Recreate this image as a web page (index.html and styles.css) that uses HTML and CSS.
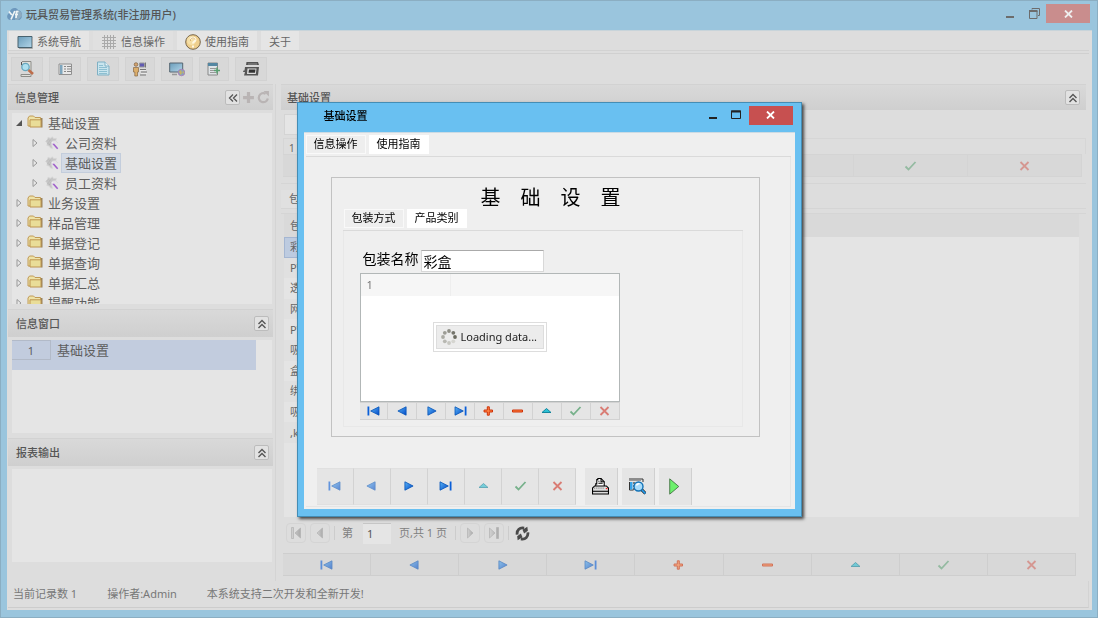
FILE: index.html
```html
<!DOCTYPE html>
<html lang="zh-CN">
<head>
<meta charset="utf-8">
<title>玩具贸易管理系统(非注册用户)</title>
<link rel="stylesheet" href="styles.css">
</head>
<body>
<svg class="defs" aria-hidden="true">
  <defs>
    <linearGradient id="gBlue" x1="0" y1="0" x2="1" y2="1"><stop offset="0" stop-color="#5ab4f5"/><stop offset="1" stop-color="#0048c8"/></linearGradient>
    <linearGradient id="gScreen" x1="0" y1="0" x2="1" y2="1"><stop offset="0" stop-color="#6a9dbb"/><stop offset="1" stop-color="#b3d5e8"/></linearGradient>
    <linearGradient id="gGrey" x1="0" y1="0" x2="1" y2="0"><stop offset="0" stop-color="#d2d2d2"/><stop offset="1" stop-color="#aaa"/></linearGradient>
  </defs>
  <symbol id="first" viewBox="0 0 12 10"><path d="M0 .5h1.800v9H0z" fill="#0a5fd8"/><path d="M11.500.8v8.400L3.200 5z" fill="url(#gBlue)" stroke="#0654b8" stroke-width=".8"/></symbol>
  <symbol id="prev" viewBox="0 0 12 10"><path d="M9.600.8v8.400L1.400 5z" fill="url(#gBlue)" stroke="#0654b8" stroke-width=".8"/></symbol>
  <symbol id="next" viewBox="0 0 12 10"><path d="M2.400.8v8.400L10.600 5z" fill="url(#gBlue)" stroke="#0654b8" stroke-width=".8"/></symbol>
  <symbol id="last" viewBox="0 0 12 10"><path d="M10.200.5H12v9h-1.800z" fill="#0a5fd8"/><path d="M.5.8v8.400L8.800 5z" fill="url(#gBlue)" stroke="#0654b8" stroke-width=".8"/></symbol>
  <symbol id="add" viewBox="0 0 12 10"><path d="M4.800.8h2v3.200H10v2H6.800v3.200h-2V6H1.600V4h3.200z" fill="#ff8040" stroke="#cf3208" stroke-width="1"/></symbol>
  <symbol id="del" viewBox="0 0 12 10"><path d="M1 4h10v2H1z" fill="#ff8040" stroke="#cf3208" stroke-width="1"/></symbol>
  <symbol id="edit" viewBox="0 0 12 10"><path d="M1.500 6.500 6 2.500l4.500 4z" fill="#2cc0d4" stroke="#087e96" stroke-width=".9"/></symbol>
  <symbol id="ok" viewBox="0 0 12 10"><path d="M1 5.500 4 8.500l7-7.500" fill="none" stroke="#2f8f50" stroke-width="1.800"/></symbol>
  <symbol id="no" viewBox="0 0 12 10"><path d="m2 1 8 8m0-8L2 9" fill="none" stroke="#d2382a" stroke-width="1.800"/></symbol>
  <symbol id="gfirst" viewBox="0 0 12 12"><path d="M1.500.5h2v11h-2zM10.500 1v10L5 6z" fill="url(#gGrey)" stroke="#b2b2b2" stroke-width=".7"/></symbol>
  <symbol id="gprev" viewBox="0 0 12 12"><path d="M8.500 1v10L3 6z" fill="url(#gGrey)" stroke="#b2b2b2" stroke-width=".7"/></symbol>
  <symbol id="gnext" viewBox="0 0 12 12"><path d="M3.500 1v10L9 6z" fill="url(#gGrey)" stroke="#b2b2b2" stroke-width=".7"/></symbol>
  <symbol id="glast" viewBox="0 0 12 12"><path d="M1.500 1v10L7 6zM8.500.5h2v11h-2z" fill="url(#gGrey)" stroke="#b2b2b2" stroke-width=".7"/></symbol>
  <symbol id="up2" viewBox="0 0 10 10"><path d="M1.500 5 5 1.500 8.500 5M1.500 9 5 5.500 8.500 9" fill="none" stroke="#555" stroke-width="1.400"/></symbol>
  <symbol id="folder" viewBox="0 0 16 13"><path d="M5 3h10.500v9.500H14V5z" fill="#98825a"/><path d="M1 11V3l1.500-2h4L8 2.500h5.500V11z" fill="#eee3a8" stroke="#c09a56"/><path d="M3 12V4.800h11V12z" fill="#e9dd98" stroke="#bd9450"/></symbol>
  <symbol id="closed" viewBox="0 0 6 10"><path d="M1 1.500v7L5 5z" fill="#e8e8e8" stroke="#999"/></symbol>
  <symbol id="gear" viewBox="0 0 14 14"><path d="m3 1 2 1.500L7.500.8l1 1.800 3-.3-.6 2.500L13 7l-2.500-2.200-3 .2-1 3 1 4.500-2-.5-1.500-2-2.200-.5.400-2.300L.5 5.500 2.500 4z" fill="#c6c6c6" stroke="#d8d8d8" stroke-width=".7"/><path d="m1.500 5 3-3m-2 6L6 3m-2 6 2-3" stroke="#aaa" stroke-width=".8" stroke-dasharray="1 1"/><path d="m7.500 7 5.200 5.700" stroke="#a060cc" stroke-width="1.600"/><path d="m7 6 1.500 1.700" stroke="#eee" stroke-width="1.800"/></symbol>
</svg>

<div class="window">
  <header class="titlebar">
    <svg class="logo" viewBox="0 0 16 14"><path d="M3 13C-1 12-.5 7 2.500 6 3 1 9-.5 11 3c4 0 6 7 1.500 10z" fill="#6d98bd"/><path d="M8 4c4-2 7 1 7 5l-4 4H8z" fill="#8dabc1"/><path d="m2 4.500 2.800 3.500m3-4L4 12.500M11.500 4.500H9.700L9 11M8 7.500h3" stroke="#eef3f5" stroke-width="1.700" fill="none"/></svg>
    <h1>玩具贸易管理系统(非注册用户)</h1>
    <div class="controls">
      <button aria-label="最小化"><svg width="10" height="10"><path d="M1 8h8" stroke="#6c6c6c" stroke-width="2"/></svg></button>
      <button aria-label="还原"><svg width="11" height="11"><path d="M3 1.500V.5h7.500v7H9M.5 3h7.500v7.500H.5z" fill="none" stroke="#6c6c6c"/><path d="M0 3h8.500" stroke="#6c6c6c" stroke-width="2"/></svg></button>
      <button class="close" aria-label="关闭"><svg width="9" height="8"><path d="m1 .5 7 7m0-7-7 7" stroke="#eee" stroke-width="1.800"/></svg></button>
    </div>
  </header>
  <div class="client">
    <nav class="menu">
      <button class="lit"><svg width="16" height="16"><path d="M1 2.500h14v11H1z" fill="url(#gScreen)" stroke="#48626f"/><path d="M2 14.500h13.500V4" fill="none" stroke="#aaa"/></svg>系统导航</button>
      <button><svg width="16" height="16"><path d="M3.500 1v14m3-14v14m3-14v14m3-14v14M1 3.500h14m-14 3h14m-14 3h14m-14 3h14" stroke="#aaa"/></svg>信息操作</button>
      <button class="lit"><svg width="16" height="16"><circle cx="8" cy="8" r="7.300" fill="#efcf8d" stroke="#77654a"/><circle cx="6.500" cy="6.500" r="4.500" fill="#f5dfa7"/><path d="M5.500 5.500c.5-2.500 5.500-2.300 5 .5C10 8 8 7.500 8 9.500m0 2v2" stroke="#fff8e4" stroke-width="2" fill="none"/><path d="M5.500 7V5.500c1-2 4-2 4.500 0" stroke="#c69346" fill="none" stroke-width=".6"/></svg>使用指南</button>
      <button class="lit">关于</button>
    </nav>
    <div class="toolbar">
      <button aria-label="查找"><svg viewBox="0 0 16 16"><path d="M3 .5h9v15H2v-2h9" fill="#e0dfda" stroke="#8c8c88"/><path d="M2.500 1v3h2" stroke="#555" fill="none"/><circle cx="6.500" cy="6" r="3.700" fill="#aee0ef" stroke="#68a7be" stroke-width="1.300"/><path d="m9.500 9 4.500 4" stroke="#bd6d4b" stroke-width="2.600"/></svg></button>
      <button aria-label="列表"><svg viewBox="0 0 16 16"><path d="M2 3h12.500v10.500H2z" fill="#e8e8e8" stroke="#909090"/><path d="M3 4h2.500v9H3z" fill="#7ea6be"/><path d="M7 5.500h2m1 0h4M7 8h2m1 0h4M7 10.500h2m1 0h4" stroke="#888"/></svg></button>
      <button aria-label="文档"><svg viewBox="0 0 16 16"><path d="M2.500 1h7.500l4 4v9H2.500z" fill="#c9e5ee" stroke="#7fb0c4"/><path d="M10 1v4h4" fill="#eaf5f8" stroke="#7fb0c4"/><path d="M4 4.500h4m-4 2h8m-8 2h8m-8 2h8m-8 2h8" stroke="#8dbfd1"/></svg></button>
      <button class="slim" aria-label="用户"><svg viewBox="0 0 16 16"><path d="M7.500 2h5v4h-5z" fill="#615bb2" stroke="#999"/><path d="M13.500 1.500v5M8 8.500h6m-5 2.500h6M8 14h6" stroke="#777"/><path d="M8 9.500h6M9 12.500h6" stroke="#e8e8e8"/><circle cx="4" cy="3.500" r="1.800" fill="#d4a36e" stroke="#7b6042" stroke-width=".7"/><path d="M1.500 6.500h5V11H5.500v4H2.800v-4H1.500z" fill="#dbae6b" stroke="#876743" stroke-width=".7"/></svg></button>
      <button aria-label="网络"><svg viewBox="0 0 16 16"><path d="M.7 2h13v9h-13z" fill="url(#gScreen)" stroke="#566570"/><path d="M3 13.500h5" stroke="#999" stroke-width="1.500"/><circle cx="12.500" cy="11.500" r="3.300" fill="#8ba0bd" stroke="#aa76b4" stroke-width=".7"/><path d="M10 10.500 12 9l1 3-1.500 2zm4-1 1.500 3-2-.5z" fill="#c5b463"/></svg></button>
      <button class="slim" aria-label="新增"><svg viewBox="0 0 16 16"><path d="M2 2h9.500v12H2z" fill="#dfe4e7" stroke="#888"/><path d="M2 2h9.500v3H2z" fill="#5487a2"/><path d="M4 7.500h6m-6 2h4m-4 2h6" stroke="#999"/><path d="M8 9.500h6M11 6.500v6" stroke="#5aa071" stroke-width="1.600"/></svg></button>
      <button aria-label="打印"><svg viewBox="0 0 16 16"><path d="M3.500 1H15l1 3H3z" fill="#555"/><path d="M5 3h9" stroke="#aaa" stroke-width=".7"/><path d="M2 6h14l-1 8.500H1L2 11H0l.5-1.500h1z" fill="#555"/><path d="M4.500 7.500h9l-.7 5.500H4z" fill="#ddd"/><path d="M6 8.500h6.500l-.5 3.200H5.500z" fill="#333"/></svg></button>
    </div>

    <main class="columns">
      <aside class="side">
        <section class="panel grow">
          <h2 class="bar"><span>信息管理</span>
            <button class="mini" aria-label="收起"><svg viewBox="0 0 10 10"><path d="M5 1.500 1.500 5 5 8.500M9 1.500 5.500 5 9 8.500" fill="none" stroke="#555" stroke-width="1.300"/></svg></button>
            <button class="bare" aria-label="添加"><svg viewBox="0 0 12 12"><path d="M4.500 1h3v3.500H11v3H7.500V11h-3V7.500H1v-3h3.500z" fill="#b9b4b4"/></svg></button>
            <button class="bare" aria-label="刷新"><svg viewBox="0 0 12 12"><path d="M8 2.500A4.200 4.200 0 1 0 10 7" fill="none" stroke="#b9b4b4" stroke-width="2"/><path d="M6 0h5v5z" fill="#b9b4b4"/></svg></button>
          </h2>
          <ul class="tree">
            <li><svg class="tri" viewBox="0 0 6 6"><path d="M6 0v6H0z" fill="#555"/></svg><svg class="fold"><use href="#folder"/></svg><span>基础设置</span></li>
            <li class="leaf"><svg class="exp"><use href="#closed"/></svg><svg class="gear"><use href="#gear"/></svg><span>公司资料</span></li>
            <li class="leaf"><svg class="exp"><use href="#closed"/></svg><svg class="gear"><use href="#gear"/></svg><span class="selected">基础设置</span></li>
            <li class="leaf"><svg class="exp"><use href="#closed"/></svg><svg class="gear"><use href="#gear"/></svg><span>员工资料</span></li>
            <li><svg class="exp"><use href="#closed"/></svg><svg class="fold"><use href="#folder"/></svg><span>业务设置</span></li>
            <li><svg class="exp"><use href="#closed"/></svg><svg class="fold"><use href="#folder"/></svg><span>样品管理</span></li>
            <li><svg class="exp"><use href="#closed"/></svg><svg class="fold"><use href="#folder"/></svg><span>单据登记</span></li>
            <li><svg class="exp"><use href="#closed"/></svg><svg class="fold"><use href="#folder"/></svg><span>单据查询</span></li>
            <li><svg class="exp"><use href="#closed"/></svg><svg class="fold"><use href="#folder"/></svg><span>单据汇总</span></li>
            <li><svg class="exp"><use href="#closed"/></svg><svg class="fold"><use href="#folder"/></svg><span>提醒功能</span></li>
          </ul>
        </section>
        <section class="panel">
          <h2 class="bar tall"><span>信息窗口</span><button class="mini" aria-label="折叠"><svg><use href="#up2"/></svg></button></h2>
          <div class="box"><div class="info-row"><span class="num">1</span><span>基础设置</span></div></div>
        </section>
        <section class="panel">
          <h2 class="bar tall"><span>报表输出</span><button class="mini" aria-label="折叠"><svg><use href="#up2"/></svg></button></h2>
          <div class="box"></div>
        </section>
      </aside>

      <section class="work">
        <h2 class="bar"><span>基础设置</span><button class="mini" aria-label="折叠"><svg><use href="#up2"/></svg></button></h2>
        <input class="filter" aria-label="筛选">
        <div class="record">1</div>
        <div class="nav seven">
          <button aria-label="首条"><svg><use href="#first"/></svg></button>
          <button aria-label="上一条"><svg><use href="#prev"/></svg></button>
          <button aria-label="下一条"><svg><use href="#next"/></svg></button>
          <button aria-label="末条"><svg><use href="#last"/></svg></button>
          <button aria-label="编辑"><svg><use href="#edit"/></svg></button>
          <button class="off" aria-label="保存"><svg><use href="#ok"/></svg></button>
          <button class="off" aria-label="取消"><svg><use href="#no"/></svg></button>
        </div>
        <div class="worktab"><button>包装方式</button></div>
        <div class="grid">
          <table>
            <thead><tr><th class="name">包装名称</th><th></th></tr></thead>
            <tbody>
              <tr class="current"><td>彩盒</td></tr><tr><td>PVC</td></tr><tr><td>透明盒</td></tr><tr><td>网袋</td></tr><tr><td>PVC</td></tr>
              <tr><td>吸塑</td></tr><tr><td>盒装</td></tr><tr><td>绑卡</td></tr><tr><td>吸卡</td></tr><tr><td>,k</td></tr>
            </tbody>
          </table>
        </div>
        <div class="pager">
          <button aria-label="首页"><svg><use href="#gfirst"/></svg></button>
          <button aria-label="上一页"><svg><use href="#gprev"/></svg></button>
          <i class="sep"></i>
          <label for="page">第</label><input id="page" value="1"><span class="total">页,共 1 页</span>
          <i class="sep"></i>
          <button aria-label="下一页"><svg><use href="#gnext"/></svg></button>
          <button aria-label="末页"><svg><use href="#glast"/></svg></button>
          <i class="sep"></i>
          <button class="reload" aria-label="刷新"><svg viewBox="0 0 14 14"><path d="M8.500 2C4.500 1 1.500 4 2 8M5.500 12C9.500 13 12.500 10 12 6" fill="none" stroke="#4a4a4a" stroke-width="2.600"/><path d="M7 3.500 11.500.8 12 4.500 8.500 7zM7 10.500 2.500 13.200 2 9.500 5.500 7z" fill="#4a4a4a"/></svg></button>
        </div>
        <div class="nav nine">
          <button aria-label="首条"><svg><use href="#first"/></svg></button>
          <button aria-label="上一条"><svg><use href="#prev"/></svg></button>
          <button aria-label="下一条"><svg><use href="#next"/></svg></button>
          <button aria-label="末条"><svg><use href="#last"/></svg></button>
          <button aria-label="添加"><svg><use href="#add"/></svg></button>
          <button aria-label="删除"><svg><use href="#del"/></svg></button>
          <button aria-label="编辑"><svg><use href="#edit"/></svg></button>
          <button class="off" aria-label="保存"><svg><use href="#ok"/></svg></button>
          <button class="off" aria-label="取消"><svg><use href="#no"/></svg></button>
        </div>
      </section>
    </main>
    <footer class="status"><span>当前记录数 1</span><span>操作者:Admin</span><span>本系统支持二次开发和全新开发!</span></footer>
  </div>
</div>

<div class="overlay">
  <section class="dialog" role="dialog" aria-labelledby="dlg">
    <header class="dialog-title">
      <h2 id="dlg">基础设置</h2>
      <div class="controls">
        <button aria-label="最小化"><svg width="10" height="10"><path d="M1 8h8" stroke="#222" stroke-width="2"/></svg></button>
        <button aria-label="最大化"><svg width="11" height="10"><path d="M.5 1h9v7.500h-9z" fill="none" stroke="#222"/><path d="M0 1.500h10" stroke="#222" stroke-width="2"/></svg></button>
        <button class="close" aria-label="关闭"><svg width="9" height="8"><path d="m1 .5 7 7m0-7-7 7" stroke="#fff" stroke-width="1.800"/></svg></button>
      </div>
    </header>
    <div class="dialog-body">
      <div class="tabs"><button>信息操作</button><button class="active">使用指南</button></div>
      <div class="tabpage">
        <div class="group">
          <h3>基　础　设　置</h3>
          <div class="tabs"><button>包装方式</button><button class="active">产品类别</button></div>
          <div class="inner">
            <div class="field"><label for="pack">包装名称</label><input id="pack" value="彩盒"></div>
            <div class="listing">
              <div class="listing-head"><span>1</span></div>
              <div class="loading"><div><svg viewBox="0 0 16 16"><circle cx="8" cy="2" r="1.900" fill="#8f8f86"/><circle cx="12.300" cy="3.800" r="1.900" fill="#75756c"/><circle cx="14" cy="8" r="1.900" fill="#6b6b60"/><circle cx="12.300" cy="12.300" r="1.900" fill="#d5d5d0"/><circle cx="8" cy="14" r="1.900" fill="#c6c6c0"/><circle cx="3.800" cy="12.300" r="1.900" fill="#b8b8b2"/><circle cx="2" cy="8" r="1.900" fill="#aaaaa3"/><circle cx="3.800" cy="3.800" r="1.900" fill="#9c9c95"/></svg>Loading data...</div></div>
            </div>
            <div class="nav small">
              <button aria-label="首条"><svg><use href="#first"/></svg></button>
              <button aria-label="上一条"><svg><use href="#prev"/></svg></button>
              <button aria-label="下一条"><svg><use href="#next"/></svg></button>
              <button aria-label="末条"><svg><use href="#last"/></svg></button>
              <button aria-label="添加"><svg><use href="#add"/></svg></button>
              <button aria-label="删除"><svg><use href="#del"/></svg></button>
              <button aria-label="编辑"><svg><use href="#edit"/></svg></button>
              <button class="off" aria-label="保存"><svg><use href="#ok"/></svg></button>
              <button class="off" aria-label="取消"><svg><use href="#no"/></svg></button>
            </div>
          </div>
        </div>
        <div class="actions">
          <div class="nav large">
            <button class="off" aria-label="首条"><svg><use href="#first"/></svg></button>
            <button class="off" aria-label="上一条"><svg><use href="#prev"/></svg></button>
            <button aria-label="下一条"><svg><use href="#next"/></svg></button>
            <button aria-label="末条"><svg><use href="#last"/></svg></button>
            <button class="off" aria-label="编辑"><svg><use href="#edit"/></svg></button>
            <button class="off" aria-label="保存"><svg><use href="#ok"/></svg></button>
            <button class="off" aria-label="取消"><svg><use href="#no"/></svg></button>
          </div>
          <button class="big" aria-label="打印"><svg viewBox="0 0 16 16"><path d="M3.500 7.500V5.500h1V1.500h1v-1h3l3 3v4" fill="#fff" stroke="#000"/><path d="M8.500.5v3h3M6 3h1M6 5h4" fill="none" stroke="#000"/><path d="M2.500 7.500h11l2 2v5.500H.5V9.500z" fill="#ddd" stroke="#000"/><path d="M.5 12.500h15" stroke="#000"/><path d="M2 9.500h10" stroke="#888" stroke-dasharray="1 1"/><path d="M13 10h1.500" stroke="red"/></svg></button>
          <button class="big" aria-label="预览"><svg viewBox="0 0 17 17"><path d="M0 1h14v3M.5 4v8h4" fill="none" stroke="#333"/><path d="M0 2.500h12" stroke="#999"/><path d="M1 4h2.500v7.500H1z" fill="#38a4e8"/><path d="M5 4v8" stroke="#111" stroke-dasharray="2 1"/><circle cx="9.500" cy="8.500" r="4.500" fill="#a9dcfa" stroke="#1273b8" stroke-width="1.400"/><path d="M7.500 7.500c.5-1.500 2-2 3-1.500" stroke="#fff" stroke-width="1.500" fill="none"/><path d="m13 12 3.500 3.500" stroke="#000" stroke-width="3"/><path d="m13 12 3.500 3.500" stroke="#2a9be8" stroke-width="1.800"/></svg></button>
          <button class="big" aria-label="运行"><svg viewBox="0 0 16 16"><path d="M3.500.8v14.400L12 8z" fill="#6cf06c" stroke="#4b7a4b" stroke-width=".9"/></svg></button>
        </div>
      </div>
    </div>
  </section>
</div>
</body>
</html>
```

FILE: styles.css
```css
* { box-sizing: border-box; }
body, h1, h2, h3, ul { margin: 0; padding: 0; }
body {
  font-family: "Noto Sans", "Noto Sans CJK SC", sans-serif;
  font-size: 11px;
  line-height: 16px;
  color: #666;
  background: #99c4dc;
}
button, input { font: inherit; color: inherit; margin: 0; padding: 0; border: 0; background: none; border-radius: 0; }
button { display: flex; align-items: center; justify-content: center; }
svg { display: block; flex: none; }
.defs { position: absolute; width: 0; height: 0; }

.window {
  min-height: 100vh;
  display: flex;
  flex-direction: column;
  border: 1px solid #8baec2;
  padding: 0 5px 7px 6px;
  background: #9ac5dd;
}
.titlebar { display: flex; height: 29px; }
.titlebar h1 { font-size: 11px; font-weight: 500; line-height: 27px; flex: 1; color: #555; }
.logo { width: 16px; height: 14px; margin: 6px 3px 0 0; }
.controls { display: flex; align-items: flex-start; }
.controls button { width: 24px; height: 19px; margin-top: 3px; }
.controls .close { width: 44px; background: #c98d8d; }
.titlebar .controls { margin-right: 2px; }

.client { flex: 1; display: flex; flex-direction: column; background: #ddd; border-top: 1px solid #c8d4da; padding: 0 3px 2px 1px; }
.menu { display: flex; gap: 4px; height: 20px; padding-left: 1px; border-bottom: 1px solid #d2d2d2; }
.menu button { padding: 2px 8px 0; gap: 4px; background: #e0e0e0; }
.menu .lit { background: #e5e5e5; }
.toolbar { display: flex; gap: 6px; margin-top: 2px; padding: 3px 0 3px 3px; border-top: 1px solid #d0d0d0; }
.toolbar button { width: 32px; height: 24px; background: #d8d8d8; border: 1px solid #d2d2d2; }
.toolbar .slim { width: 30px; }
.toolbar svg { width: 16px; height: 16px; }

.columns { flex: 1; display: flex; gap: 5px; padding-right: 3px; }
.side { width: 268px; display: flex; flex-direction: column; gap: 5px; padding-bottom: 19px; border-right: 1px solid #d4d4d4; }
.panel { display: flex; flex-direction: column; gap: 3px; padding-right: 2px; }
.grow { flex: 1; }
.bar {
  display: flex; align-items: center; gap: 2px; height: 26px; padding: 0 4px 0 7px;
  font-size: 11px; font-weight: 500; color: #555;
  background: linear-gradient(#d9d9d9, #cfcfcf);
  border-top: 1px solid #d2d2d2;
}
.bar span { flex: 1; }
.tall { height: 28px; padding-left: 8px; }
.mini { width: 15px; height: 15px; border: 1px solid #bcbcbc; border-radius: 2px; background: #e2e2e2; }
.mini svg { width: 10px; height: 10px; }
.grow .bar { padding-right: 3px; }
.bare svg { width: 13px; height: 13px; }
.tree { flex: 1 1 190px; height: 190px; overflow: hidden; list-style: none; margin: 0 1px 0 4px; padding: 0 0 0 4px; background: #e5e5e5; }
.tree li { display: flex; align-items: center; height: 20px; font-size: 13px; line-height: 18px; color: #5e5e5e; }
.tree span { padding: 0 3px; border: 1px solid transparent; }
.tree .selected { background: #d3dae5; border-color: #c3cddc; }
.leaf { padding-left: 16px; }
.exp { width: 6px; height: 10px; }
.tri { width: 6px; height: 6px; }
.fold { width: 16px; height: 13px; margin: 0 1px 3px 5px; }
.gear { width: 14px; height: 14px; margin: 0 2px 0 7px; }
.box { height: 93px; margin: 0 1px 0 4px; background: #e5e5e5; }
.info-row { display: flex; height: 30px; width: 94%; background: #c2ccde; font-size: 13px; line-height: 20px; color: #5e5e5e; }
.num { width: 39px; height: 20px; margin-right: 6px; text-align: center; font-size: 11px; border: 1px solid #b2bac8; border-left: 0; }

.work { flex: 1; min-width: 0; display: flex; flex-direction: column; }
.work .bar { padding: 0 6px; }
.filter { width: 220px; height: 21px; margin: 4px 0 0 3px; background: #e5e5e5; border: 1px solid #d4d4d4; }
.record { height: 16px; margin: 3px 0 0 2px; padding: 1px 5px 0; border: 1px solid #d6d6d6; border-bottom: 0; font-size: 10px; }
.nav { display: grid; grid-auto-flow: column; grid-auto-columns: 1fr; }
.nav button { background: #d8d8d8; border: solid #cecece; border-width: 1px 1px 1px 0; }
.nav svg { width: 13px; height: 10px; }
.seven, .nine { height: 23px; }
.seven { margin: 0 4px 0 2px; }
.seven svg, .nine svg { opacity: .6; }
.seven .off svg, .nine .off svg { opacity: .4; }
.seven button { border-color: #d4d4d4; }
.worktab { height: 34px; margin-top: 6px; padding-top: 6px; border-top: 1px solid #d5d5d5; }
.worktab button { height: 18px; padding: 0 8px; background: #e0e0e0; }
.worktab::after { content: ""; display: block; height: 4px; border: solid #d5d5d5; border-width: 1px 0; }
.grid { flex: 1; margin: -3px 7px 0 3px; background: #e4e4e4; }
.grid table { width: 100%; height: 229px; border-collapse: collapse; }
.grid th { height: 23px; background: #d9d9d9; font-weight: 400; }
.grid .name { width: 40%; }
.grid th, .grid td { padding: 0 6px; text-align: left; line-height: 16px; }
.grid tr:nth-child(even) td { background: #e0e0e0; }
.grid .current td { background: #bdcbe0; box-shadow: inset 0 0 0 1px #a4b6d2; }
.pager { display: flex; align-items: center; height: 36px; padding: 0 5px 4px; gap: 4px; color: #808080; }
.pager button { width: 20px; height: 20px; border: 1px solid #d4d4d4; border-radius: 4px; }
.pager svg { width: 12px; height: 12px; }
.pager .reload { width: 20px; border: 0; }
.pager .reload svg { width: 15px; height: 15px; }
.sep { width: 1px; height: 14px; background: #ccc; }
.pager label { margin: 0 6px 0 3px; }
.pager input { width: 28px; height: 21px; padding: 0 4px; background: #e5e5e5; border-top: 1px solid #c6c6c6; color: #555; }
.total { margin: 0 4px 0 4px; }
.nine { margin: 0 10px 5px 2px; }
.status { display: flex; align-items: center; height: 27px; padding: 0 5px; gap: 30px; color: #777; border-bottom: 1px solid #ccc; border-right: 1px solid #d3d3d3; }

.overlay { position: fixed; inset: 0; display: grid; place-items: center; }
.dialog {
  width: 505px; color: #000; background: #69c0f1;
  border: 1px solid #448db5; padding: 0 6px 7px;
  box-shadow: 2px 2px 3px #444;
}
.dialog-title { display: flex; height: 29px; }
.dialog-title h2 { flex: 1; padding-left: 20px; font-size: 11px; line-height: 26px; font-weight: 500; }
.dialog .controls { margin-right: 2px; }
.dialog .close { background: #c75050; }
.dialog-body { padding: 2px 4px 2px 2px; background: #efefef; border-top: 1px solid #ccdbe4; }
.tabs { display: flex; gap: 3px; height: 22px; border-bottom: 1px solid #dadada; }
.tabs button { height: 19px; padding: 0 7px; background: #eee; border: 1px solid #f9f9f9; }
.tabs .active { background: #fff; border-color: #fff; }
.tabpage { padding: 20px 0 1px; border: solid #e5e5e5; border-width: 0 1px 1px 0; }
.group { height: 260px; margin: 0 30px 0 25px; padding: 8px 16px 8px 11px; border: 1px solid #c2c2c2; }
.group h3 { font-size: 20px; line-height: 23px; font-weight: 400; text-align: center; margin-left: 16px; }
.group .tabs { padding-left: 1px; }
.inner { height: 196px; padding: 18px 16px 0; border: 1px solid #e8e8e8; border-top: 0; }
.field { display: flex; align-items: center; height: 24px; font-size: 14px; gap: 2px; padding-left: 3px; }
.field label { padding-bottom: 4px; }
.field input { width: 123px; height: 22px; padding: 0 2px; background: #fff; border: 1px solid #d8d8d8; border-top-color: #aaa; }
.listing { width: 260px; height: 129px; border: 1px solid #b2b7b7; background: #fff; }
.listing-head { height: 22px; background: #f6f6f6; padding-left: 6px; line-height: 22px; color: #777; }
.listing-head span { display: block; width: 84px; border-right: 1px solid #eee; }
.loading { width: 114px; height: 30px; margin: 26px auto 0; padding: 2px; background: #fff; border: 1px solid #ddd; }
.loading div { display: flex; align-items: center; gap: 4px; height: 24px; padding-left: 4px; border: 1px solid #ddd; background: #ececec; color: #222; white-space: nowrap; }
.loading svg { width: 16px; height: 16px; }
.small { width: 260px; height: 18px; }
.dialog .nav button { background: #e5e5e5; border-color: #d2d2d2; }
.small .off svg, .large .off svg { opacity: .6; }
.actions { display: flex; margin: 31px 0 0 11px; gap: 4px; }
.large { width: 260px; height: 37px; margin-right: 4px; }
.dialog .large button { border-color: #e0e0e0 #d2d2d2 #e0e0e0; }
.big { width: 33px; height: 37px; background: #e5e5e5; border-right: 1px solid #d0d0d0; }
.big svg { width: 17px; height: 17px; }
```
